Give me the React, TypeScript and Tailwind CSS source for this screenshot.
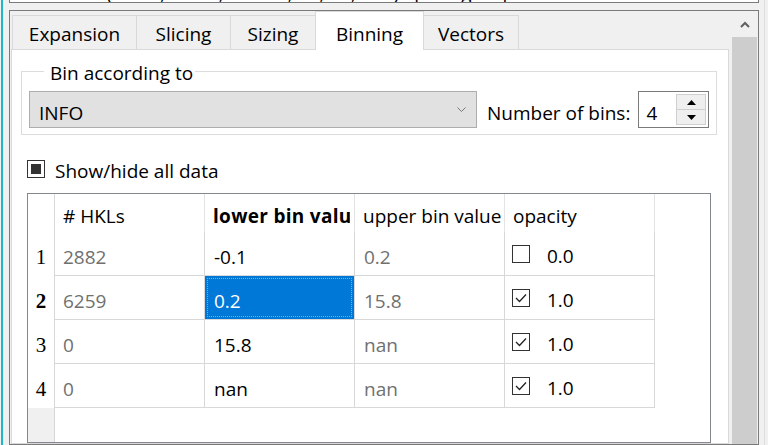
import React from 'react';

const rows = [
  { n: '1', hkls: '2882', lower: '-0.1', upper: '0.2', checked: false, opacity: '0.0' },
  { n: '2', hkls: '6259', lower: '0.2', upper: '15.8', checked: true, opacity: '1.0' },
  { n: '3', hkls: '0', lower: '15.8', upper: 'nan', checked: true, opacity: '1.0' },
  { n: '4', hkls: '0', lower: 'nan', upper: 'nan', checked: true, opacity: '1.0' },
];

function CheckBox({ checked }: { checked: boolean }) {
  return (
    <div className="flex h-[18px] w-[18px] shrink-0 items-center justify-center border border-[#333] bg-white">
      {checked && (
        <svg width="16" height="16" viewBox="0 0 16 16">
          <polyline points="3,8 6.5,11.5 13,4.5" fill="none" stroke="#222" strokeWidth="1.3" />
        </svg>
      )}
    </div>
  );
}

export default function App() {
  return (
    <div className="flex h-[445px] w-[768px] overflow-hidden bg-[#f0f0f0] font-['Open_Sans',sans-serif] text-[19px] text-black">
      <div className="ml-[1px] w-[2px] shrink-0 bg-[#1cb8c8]" />
      <div className="w-[6px] shrink-0" />

      <div className="flex w-[750px] shrink-0 flex-col">
        {/* label above, cut off by the window edge */}
        <div className="h-[3px] overflow-hidden border-x border-b border-[#7a7a7a] bg-white">
          <div className="-mt-[17px] whitespace-nowrap pl-[15px] leading-[20px]">
            Unit cell: (46.87, 46.87, 155.21, 90, 90, 120) Space group: P 65 2 2
          </div>
        </div>

        {/* scroll area */}
        <div className="mt-[7px] flex flex-1 border border-[#7a7a7a]">
          <div className="flex w-[722px] shrink-0 pl-[1px] pr-[3px]">
            <div className="flex flex-1 flex-col">
              {/* tab bar */}
              <div className="flex h-[38px] shrink-0 items-end pl-[1px]">
                <div className="flex h-[34px] w-[124px] items-center justify-center border-l border-t border-[#d9d9d9] bg-[#f0f0f0] pt-[4px]">Expansion</div>
                <div className="flex h-[34px] w-[94px] items-center justify-center border-l border-t border-[#d9d9d9] bg-[#f0f0f0] pt-[4px]">Slicing</div>
                <div className="flex h-[34px] w-[85px] items-center justify-center border-l border-t border-[#d9d9d9] bg-[#f0f0f0] pt-[4px]">Sizing</div>
                <div className="relative z-10 -mb-px flex h-[39px] w-[109px] items-center justify-center border-x border-t border-[#d9d9d9] bg-white pt-[7px]">Binning</div>
                <div className="flex h-[34px] w-[95px] items-center justify-center border-r border-t border-[#d9d9d9] bg-[#f0f0f0] pt-[4px]">Vectors</div>
              </div>

              {/* pane */}
              <div className="flex flex-1 flex-col border border-[#d9d9d9] bg-white pl-[9px]">
                <fieldset className="mt-[9px] flex w-[696px] items-center border border-[#dcdcdc] pb-[6px] pl-[7px] pt-[8px]">
                  <legend className="ml-[15px] pl-[6px] pr-[2px] pt-[4px] leading-[20px]">Bin according to</legend>
                  <div className="flex h-[37px] w-[448px] items-center justify-between border border-[#adadad] bg-[#e1e1e1] pl-[9px] pr-[10px]">
                    <span className="pt-[6px] leading-[24px]">INFO</span>
                    <svg width="9" height="6" viewBox="0 0 9 6">
                      <polyline points="0.5,0.5 4.5,4.5 8.5,0.5" fill="none" stroke="#777" strokeWidth="1" />
                    </svg>
                  </div>
                  <span className="ml-[10px] whitespace-nowrap pt-[6px] leading-[24px]">Number of bins:</span>
                  <div className="ml-[8px] flex h-[37px] w-[71px] items-center border border-[#7a7a7a] bg-white pl-[7px] pr-[2px]">
                    <span className="flex-1 pt-[6px] leading-[24px]">4</span>
                    <div className="flex h-[31px] w-[30px] flex-col border border-[#cfcfcf]">
                      <div className="flex flex-1 items-center justify-center border-b border-[#cfcfcf] bg-[#efefef]">
                        <svg width="9" height="5" viewBox="0 0 9 5"><polygon points="4.5,0 9,5 0,5" fill="#000" /></svg>
                      </div>
                      <div className="flex flex-1 items-center justify-center bg-[#efefef]">
                        <svg width="9" height="5" viewBox="0 0 9 5"><polygon points="0,0 9,0 4.5,5" fill="#000" /></svg>
                      </div>
                    </div>
                  </div>
                </fieldset>

                <div className="ml-[6px] mt-[22px] flex h-[24px] items-center gap-[10px]">
                  <div className="flex h-[18px] w-[18px] items-center justify-center border border-[#333] bg-white">
                    <div className="h-[10px] w-[10px] bg-[#333]" />
                  </div>
                  <span className="pt-[4px] leading-[24px]">Show/hide all data</span>
                </div>

                {/* table */}
                <div className="ml-[6px] mt-[12px] flex w-[684px] flex-1 flex-col border border-[#828790] bg-white">
                  <div className="flex h-[38px] shrink-0 leading-[24px]">
                    <div className="w-[27px] border-r border-[#d8d8d8]" />
                    <div className="flex w-[150px] items-center overflow-hidden whitespace-nowrap border-r border-[#e3e3e3] pl-[8px] pt-[6px]"># HKLs</div>
                    <div className="flex w-[150px] items-center overflow-hidden whitespace-nowrap border-r border-[#e3e3e3] pl-[8px] pr-[4px] pt-[6px] font-bold">
                      <span className="block overflow-hidden tracking-[0.3px]">lower bin value</span>
                    </div>
                    <div className="flex w-[150px] items-center overflow-hidden whitespace-nowrap border-r border-[#e3e3e3] pl-[8px] pt-[6px]">upper bin value</div>
                    <div className="flex w-[150px] items-center overflow-hidden whitespace-nowrap border-r border-[#e3e3e3] pl-[8px] pt-[6px]">opacity</div>
                  </div>
                  {rows.map((r) => (
                    <div key={r.n} className="flex h-[44px] shrink-0 leading-[24px]">
                      <div className={`flex w-[27px] items-center justify-center border-r border-[#d8d8d8] pt-[6px] font-['Liberation_Serif',serif] text-[21px] ${r.n === '2' ? 'font-bold' : ''}`}>
                        {r.n}
                      </div>
                      <div className="flex w-[150px] items-center border-b border-r border-[#d8d8d8] pl-[8px] pt-[6px] text-[#707070]">{r.hkls}</div>
                      {r.n === '2' ? (
                        <div className="flex w-[150px] border-b border-r border-[#d8d8d8] bg-[#0078d7] p-[2px]">
                          <div className="flex flex-1 items-center border border-dotted border-[#f7941d] pl-[6px] pt-[6px] text-white">{r.lower}</div>
                        </div>
                      ) : (
                        <div className="flex w-[150px] items-center border-b border-r border-[#d8d8d8] pl-[9px] pt-[6px]">{r.lower}</div>
                      )}
                      <div className="flex w-[150px] items-center border-b border-r border-[#d8d8d8] pl-[9px] pt-[6px] text-[#707070]">{r.upper}</div>
                      <div className="flex w-[150px] items-center gap-[17px] border-b border-r border-[#d8d8d8] pl-[7px]">
                        <CheckBox checked={r.checked} />
                        <span className="pt-[4px]">{r.opacity}</span>
                      </div>
                    </div>
                  ))}
                  <div className="flex flex-1">
                    <div className="w-[27px] border-r border-[#d8d8d8] bg-[#f0f0f0]" />
                  </div>
                </div>
              </div>
            </div>
          </div>

          {/* vertical scrollbar */}
          <div className="flex w-[26px] shrink-0 flex-col">
            <div className="flex h-[26px] items-center justify-center">
              <svg width="10" height="7" viewBox="0 0 10 7">
                <polyline points="1,6 5,2 9,6" fill="none" stroke="#606060" strokeWidth="2" />
              </svg>
            </div>
            <div className="mr-[1px] flex-1 bg-[#cdcdcd]" />
          </div>
        </div>
      </div>

      <div className="ml-[5px] w-px shrink-0 bg-[#dedede]" />
    </div>
  );
}
